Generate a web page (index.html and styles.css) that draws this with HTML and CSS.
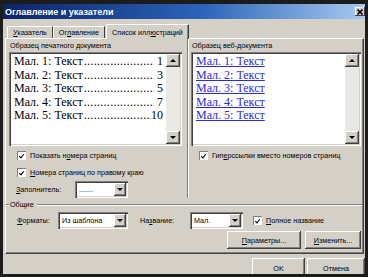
FILE: index.html
```html
<!DOCTYPE html>
<html lang="ru">

<head>
    <meta charset="utf-8">
    <meta name="viewport" content="width=device-width, initial-scale=1.0">
    <title>Оглавление и указатели</title>
    <link rel="stylesheet" href="styles.css">
</head>

<body>
    <div class="window">
        <div class="titlebar">
            <span class="title">Оглавление и указатели</span>
            <span class="close">
                <svg width="6" height="6" viewBox="0 0 6 6"><path d="M0.5 0.5 L5.5 5.5 M5.5 0.5 L0.5 5.5" stroke="#000" stroke-width="1.6"/></svg>
            </span>
        </div>

        <div class="tabs">
            <div class="tab"><u>У</u>казатель</div>
            <div class="tab">Ог<u>л</u>авление</div>
            <div class="tab active">Список илл<u>ю</u>страций</div>
        </div>

        <div class="panel">
            <div class="previews">
                <div class="col print">
                    <div class="caption">Образец печатного документа</div>
                    <div class="listbox">
                        <div class="lines">
                            <div class="line"><span>Мал. 1: Текст</span><span class="dots"></span><span>1</span></div>
                            <div class="line"><span>Мал. 2: Текст</span><span class="dots"></span><span>3</span></div>
                            <div class="line"><span>Мал. 3: Текст</span><span class="dots"></span><span>5</span></div>
                            <div class="line"><span>Мал. 4: Текст</span><span class="dots"></span><span>7</span></div>
                            <div class="line"><span>Мал. 5: Текст</span><span class="dots last"></span><span>10</span></div>
                        </div>
                        <div class="scroll"><span class="sbtn up"></span><span class="sbtn down"></span></div>
                    </div>
                    <div class="check first"><span class="box"></span>Показать н<u>о</u>мера страниц</div>
                    <div class="check second"><span class="box"></span><u>Н</u>омера страниц по правому краю</div>
                    <div class="fillrow">
                        <span class="fill-label"><u>З</u>аполнитель:</span>
                        <div class="select fill-select"><span class="value">.......</span><span class="arrow"></span></div>
                    </div>
                </div>

                <div class="col web">
                    <div class="caption">Образец веб-документа</div>
                    <div class="listbox">
                        <div class="lines">
                            <div class="line link">Мал. 1: Текст</div>
                            <div class="line link">Мал. 2: Текст</div>
                            <div class="line link">Мал. 3: Текст</div>
                            <div class="line link">Мал. 4: Текст</div>
                            <div class="line link">Мал. 5: Текст</div>
                        </div>
                        <div class="scroll"><span class="sbtn up"></span><span class="sbtn down"></span></div>
                    </div>
                    <div class="check first hyper"><span class="box"></span>Гип<u>е</u>рссылки вместо номеров страниц</div>
                </div>
            </div>

            <div class="group">
                <div class="group-head">Общие</div>
                <div class="group-row">
                    <span class="lbl-format"><u>Ф</u>орматы:</span>
                    <div class="select format-select"><span class="value">Из шаблона</span><span class="arrow"></span></div>
                    <span class="lbl-name">На<u>з</u>вание:</span>
                    <div class="select name-select"><span class="value">Мал.</span><span class="arrow"></span></div>
                    <div class="check full"><span class="box"></span><u>П</u>олное название</div>
                </div>
                <div class="group-buttons">
                    <div class="btn params"><u>П</u>араметры...</div>
                    <div class="btn change"><u>И</u>зменить...</div>
                </div>
            </div>
        </div>

        <div class="footer">
            <div class="btn ok">OK</div>
            <div class="btn cancel">Отмена</div>
        </div>
    </div>
</body>

</html>
```

FILE: styles.css
```css
* {
    box-sizing: border-box;
}

body {
    margin: 0;
    background: #1c1c1c;
    font-family: "Liberation Sans", Arial, sans-serif;
    font-size: 7.2px;
    color: #000;
}

u {
    text-decoration: underline;
}

.window {
    width: 368px;
    height: 277px;
    background: #d4d0c8;
    border-style: solid;
    border-color: #1c1c1c;
    border-width: 4px 3px 3px 3px;
    overflow: hidden;
    display: flex;
    flex-direction: column;
}

/* title */

.titlebar {
    height: 15px;
    flex: none;
    display: flex;
    align-items: center;
    justify-content: space-between;
    padding-left: 2px;
    background: linear-gradient(to right, #0a246a, #2b64b8 55%, #a6caf0);
}

.title {
    color: #fff;
    font-weight: bold;
    font-size: 9px;
}

.close {
    width: 10px;
    height: 9px;
    margin-right: 0;
    background: #d4d0c8;
    display: flex;
    align-items: center;
    justify-content: center;
    box-shadow: inset -1px -1px #404040, inset 1px 1px #fff;
}

/* tabs */

.tabs {
    height: 19px;
    flex: none;
    display: flex;
    align-items: flex-end;
    padding-left: 4px;
}

.tab {
    height: 12px;
    padding: 0 5px;
    display: flex;
    align-items: center;
    border-top: 1px solid #fff;
    border-left: 1px solid #fff;
    border-right: 1px solid #404040;
    white-space: nowrap;
}

.tab.active {
    height: 15px;
    margin-bottom: -1px;
    margin-left: 1px;
    background: #d4d0c8;
    position: relative;
    z-index: 1;
    box-shadow: inset -1px 0 #808080;
}

/* main panel */

.panel {
    height: 216px;
    flex: none;
    margin: 0 1px 0 2px;
    border-top: 1px solid #fff;
    border-left: 1px solid #fff;
    border-right: 1px solid #404040;
    border-bottom: 1px solid #404040;
    box-shadow: inset -1px -1px #808080;
}

.previews {
    display: flex;
    padding-left: 3px;
}

.col {
    display: flex;
    flex-direction: column;
}

.col.print {
    width: 173px;
    padding-top: 2px;
}

.col.web {
    flex: 1;
    margin-left: 5px;
    padding: 2px 2px 0 3px;
    border-left: 1px solid #808080;
    box-shadow: inset 1px 0 #fff;
}

.caption {
    height: 9px;
    line-height: 9px;
    padding-left: 1px;
    white-space: nowrap;
}

.listbox {
    height: 94px;
    margin-top: 2px;
    display: flex;
    background: #fff;
    padding: 2px;
    box-shadow: inset 1px 1px #808080, inset 2px 2px #404040, inset -1px -1px #fff, inset -2px -2px #d4d0c8;
}

.lines {
    flex: 1;
    padding: 1px 3px 0 3px;
    font-family: "Liberation Serif", "Times New Roman", serif;
    font-size: 12px;
    line-height: 13.5px;
    overflow: hidden;
}

.line {
    display: flex;
    white-space: nowrap;
}

.dots {
    flex: 1;
    overflow: hidden;
    margin: 0 3px 0 1px;
    letter-spacing: 0.3px;
}

.dots.last {
    margin-right: 0;
}

.dots::after {
    content: "..........................................................";
}

.link {
    color: #2a2ae0;
    text-decoration: underline;
}

.scroll {
    width: 14px;
    display: flex;
    flex-direction: column;
    justify-content: space-between;
    background: #ebe9e5;
}

.sbtn {
    height: 13px;
    background: #d4d0c8;
    display: flex;
    align-items: center;
    justify-content: center;
    box-shadow: inset -1px -1px #404040, inset 1px 1px #fff, inset -2px -2px #808080;
}

.sbtn::after {
    content: "";
    border-left: 3px solid transparent;
    border-right: 3px solid transparent;
}

.sbtn.up::after {
    border-bottom: 3px solid #000;
}

.sbtn.down::after {
    border-top: 3px solid #000;
}

/* checkboxes */

.check {
    height: 11px;
    display: flex;
    align-items: center;
    white-space: nowrap;
}

.check.first {
    margin-top: 4px;
    padding-left: 8px;
}

.check.second {
    margin-top: 6px;
    padding-left: 8px;
}

.check.hyper {
    padding-left: 8px;
}

.box {
    width: 9px;
    height: 9px;
    margin-right: 4px;
    flex: none;
    background: #fff;
    box-shadow: inset 1px 1px #808080, inset -1px -1px #fff;
    display: flex;
    align-items: center;
    justify-content: center;
}

.box::after {
    content: "";
    width: 2px;
    height: 4px;
    margin-top: -1px;
    border-right: 1.5px solid #000;
    border-bottom: 1.5px solid #000;
    transform: rotate(40deg);
}

/* selects */

.fillrow {
    margin-top: 3px;
    height: 17px;
    display: flex;
    align-items: center;
    padding-left: 7px;
}

.fill-label {
    width: 59px;
}

.select {
    height: 17px;
    display: flex;
    background: #fff;
    padding: 2px;
    box-shadow: inset 1px 1px #808080, inset 2px 2px #404040, inset -1px -1px #fff, inset -2px -2px #d4d0c8;
}

.select .value {
    flex: 1;
    display: flex;
    align-items: center;
    padding-left: 2px;
    white-space: nowrap;
    overflow: hidden;
}

.select .arrow {
    width: 12px;
    background: #d4d0c8;
    display: flex;
    align-items: center;
    justify-content: center;
    box-shadow: inset -1px -1px #404040, inset 1px 1px #fff, inset -2px -2px #808080;
}

.select .arrow::after {
    content: "";
    border-left: 3px solid transparent;
    border-right: 3px solid transparent;
    border-top: 3px solid #000;
}

.fill-select {
    width: 53px;
}

/* general group */

.group-head {
    margin-top: 2px;
    height: 9px;
    display: flex;
    align-items: center;
    white-space: nowrap;
}

.group-head::before {
    content: "";
    width: 3px;
    margin-right: 1px;
    border-top: 1px solid #808080;
    border-bottom: 1px solid #fff;
}

.group-head::after {
    content: "";
    flex: 1;
    margin-left: 3px;
    margin-right: 1px;
    border-top: 1px solid #808080;
    border-bottom: 1px solid #fff;
}

.group-row {
    margin-top: 3px;
    height: 17px;
    display: flex;
    align-items: center;
    padding-left: 11px;
}

.lbl-format {
    width: 41px;
}

.format-select {
    width: 70px;
}

.lbl-name {
    width: 50px;
    margin-left: 12px;
}

.name-select {
    width: 53px;
}

.check.full {
    margin-left: 10px;
}

.group-buttons {
    margin-top: 2px;
    display: flex;
    justify-content: flex-end;
    gap: 4px;
    padding-right: 2px;
}

.btn {
    height: 18px;
    display: flex;
    align-items: center;
    justify-content: center;
    background: #d4d0c8;
    white-space: nowrap;
    box-shadow: inset -1px -1px #404040, inset 1px 1px #fff, inset -2px -2px #808080;
}

.params {
    width: 74px;
}

.change {
    width: 56px;
}

/* footer */

.footer {
    margin-top: 4px;
    display: flex;
    justify-content: flex-end;
    gap: 2px;
}

.ok {
    width: 53px;
    height: 20px;
}

.cancel {
    width: 58px;
    height: 20px;
}
```
